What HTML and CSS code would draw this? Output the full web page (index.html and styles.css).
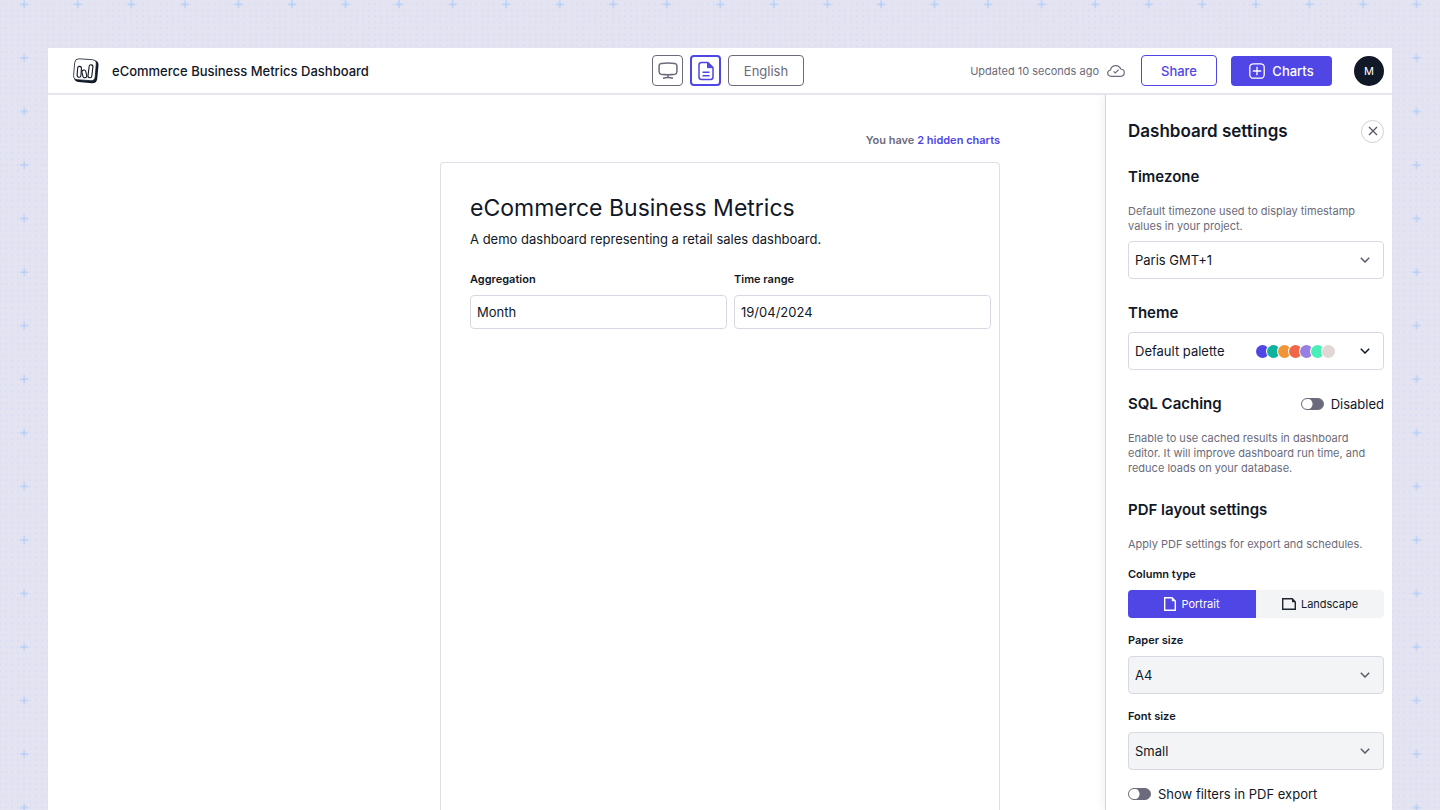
FILE: index.html
```html
<!DOCTYPE html>
<html lang="en">
<head>
<meta charset="utf-8">
<title>eCommerce Business Metrics Dashboard</title>
<link rel="stylesheet" href="styles.css">
</head>
<body>
<svg class="backdrop" aria-hidden="true">
  <defs>
    <pattern id="dots" x="-2.8" y="1.4" width="5.95" height="5.95" patternUnits="userSpaceOnUse"><rect x="2.5" y="2.5" width="1" height="1" fill="#bfd0f3"/></pattern>
    <pattern id="cross" x="-2.6" y="-22.5" width="53.55" height="53.55" patternUnits="userSpaceOnUse"><path d="M22.8 26.8h8M26.8 22.8v8" stroke="#adcdf8" stroke-width="1.2"/></pattern>
  </defs>
  <rect width="100%" height="100%" fill="url(#dots)"/>
  <rect width="100%" height="100%" fill="url(#cross)"/>
</svg>
<div class="window">
  <header class="topbar">
    <div class="brand">
      <svg class="logo" width="28" height="28" viewBox="0 0 28 28" fill="none" stroke="#111827">
        <path d="M6.5 2.2 22 3.2Q26.800 4 26.500 8L25.200 22Q24.600 26.400 20 26.200L6.500 25Q2 24.200 2 20.500Z" fill="#111827" stroke="none"/>
        <path d="M7 1.800 20.500 2.700Q24.600 3.200 24.300 7L23.200 20Q22.600 24 18.800 23.700L5.200 22.700Q1.300 22.200 1.600 18.500L2.700 5.600Q3.200 1.700 7 1.800Z" fill="#fff" stroke-width=".8"/>
        <g stroke-width="1.100"><rect x="5.400" y="9.400" width="3.800" height="10.800" rx="1.900" transform="rotate(4 7.300 14.500)"/><rect x="10.400" y="13" width="3.900" height="7.800" rx="1.900" transform="rotate(-14 12.300 17)"/><rect x="16.600" y="7.800" width="3.800" height="13" rx="1.900" transform="rotate(7 18.500 14)"/></g>
      </svg>
      <span class="brand-name">eCommerce Business Metrics Dashboard</span>
    </div>
    <div class="views">
      <button class="icon-btn" aria-label="Screen view">
        <svg width="20" height="20" viewBox="0 0 20 20" fill="none" stroke="#6b6b7b" stroke-width="1.500"><path d="M3 2.500Q10 1.500 17 2.500 18.700 2.900 18.900 4.600V10.800Q18.800 12.900 17 13.200 10 14.200 3 13.200 1.200 12.900 1.100 10.800V4.600Q1.200 2.800 3 2.500ZM10 14v2.500"/><path d="M5 17.200Q10 15.800 15 17.200" stroke-width="1.700"/></svg>
      </button>
      <button class="icon-btn active" aria-label="Document view">
        <svg width="20" height="20" viewBox="0 0 20 20" fill="none" stroke="#4f46e5" stroke-width="1.500"><path d="M11.800 1.500H5.500Q3 1.500 3 4V16Q3 18.500 5.500 18.500H14.500Q17 18.500 17 16V6.500Z"/><path d="M11.500 1.500V6.700H17Z" fill="#4f46e5" stroke-width="1"/><path d="M6.500 11.300h7M6.500 14.700h7"/></svg>
      </button>
      <button class="language">English</button>
    </div>
    <div class="actions">
      <span class="updated">Updated 10 seconds ago</span>
      <svg class="cloud" width="18" height="12" viewBox="0 0 18 12" fill="none" stroke="#6b6b7b" stroke-width="1.200"><path d="M4.500 11.300C2.200 11.300.700 9.900.700 8.100.700 6.500 1.900 5.300 3.500 5 4 2.500 6.200.700 8.800.700 11 .700 12.900 2 13.700 4 15.900 4.200 17.300 5.700 17.300 7.600 17.300 9.700 15.700 11.300 13.600 11.300Z"/><path d="M6.600 6.400 8.300 8 11.600 4.700"/></svg>
      <button class="share">Share</button>
      <button class="charts"><svg width="16" height="16" viewBox="0 0 16 16" fill="none" stroke="#fff" stroke-width="1.300"><rect x=".800" y=".800" width="14.400" height="14.400" rx="3.500"/><path d="M8 3.800v8.400M3.800 8h8.400"/></svg>Charts</button>
      <button class="avatar" aria-label="Account M">M</button>
    </div>
  </header>
  <div class="workspace">
    <main class="canvas">
      <p class="hidden-note">You have <a href="#">2 hidden charts</a></p>
      <section class="paper">
        <h1>eCommerce Business Metrics</h1>
        <p class="lead">A demo dashboard representing a retail sales dashboard.</p>
        <div class="filters">
          <div><label class="label" for="agg">Aggregation</label><input class="filter" id="agg" type="text" value="Month"></div>
          <div><label class="label" for="range">Time range</label><input class="filter" id="range" type="text" value="19/04/2024"></div>
        </div>
      </section>
    </main>
    <aside class="panel">
      <div class="row">
        <h2>Dashboard settings</h2>
        <button class="close" aria-label="Close"><svg width="10" height="10" viewBox="0 0 10 10" stroke="#5b5b6b" stroke-width="1.400"><path d="M1 1l8 8M9 1 1 9"/></svg></button>
      </div>
      <section class="group">
        <h3 id="tz">Timezone</h3>
        <p class="hint">Default timezone used to display timestamp values in your project.</p>
        <div class="select"><select aria-labelledby="tz"><option>Paris GMT+1</option></select><svg class="chevron" width="10" height="6" viewBox="0 0 10 6"><path d="M.800.800 5 5 9.200.800"/></svg></div>
      </section>
      <section class="group">
        <h3>Theme</h3>
        <button class="palette">
          <span>Default palette</span>
          <span class="swatches"><i class="sw indigo"></i><i class="sw teal"></i><i class="sw orange"></i><i class="sw coral"></i><i class="sw purple"></i><i class="sw mint"></i><i class="sw grey"></i></span>
          <svg class="chevron dark" width="10" height="6" viewBox="0 0 10 6"><path d="M.800.800 5 5 9.200.800"/></svg>
        </button>
      </section>
      <section class="group">
        <div class="row">
          <h3>SQL Caching</h3>
          <label class="toggle"><input type="checkbox" role="switch">Disabled</label>
        </div>
        <p class="hint">Enable to use cached results in dashboard editor. It will improve dashboard run time, and reduce loads on your database.</p>
      </section>
      <section class="group">
        <h3>PDF layout settings</h3>
        <p class="hint">Apply PDF settings for export and schedules.</p>
        <div class="field">
          <span class="label">Column type</span>
          <div class="segmented">
            <button class="seg on"><svg width="12" height="14" viewBox="0 0 12 14" fill="none" stroke="#fff" stroke-width="1.400"><path d="M.700.700H8L11.300 4V13.300H.700Z"/><path d="M7.800.700V4.200H11.300Z" fill="#fff" stroke="none"/></svg>Portrait</button>
            <button class="seg"><svg width="14" height="12" viewBox="0 0 14 12" fill="none" stroke="#1f2430" stroke-width="1.400"><path d="M.700.700H10.300L13.300 4V11.300H.700Z"/><path d="M10 .700V4.200H13.300Z" fill="#1f2430" stroke="none"/></svg>Landscape</button>
          </div>
        </div>
        <div class="field">
          <label class="label" for="size">Paper size</label>
          <div class="select muted"><select id="size"><option>A4</option></select><svg class="chevron" width="10" height="6" viewBox="0 0 10 6"><path d="M.800.800 5 5 9.200.800"/></svg></div>
        </div>
        <div class="field">
          <label class="label" for="font">Font size</label>
          <div class="select muted"><select id="font"><option>Small</option></select><svg class="chevron" width="10" height="6" viewBox="0 0 10 6"><path d="M.800.800 5 5 9.200.800"/></svg></div>
        </div>
        <label class="toggle field"><input type="checkbox" role="switch">Show filters in PDF export</label>
      </section>
    </aside>
  </div>
</div>
</body>
</html>
```

FILE: styles.css
```css
* { box-sizing: border-box; }
body {
  margin: 0;
  height: 100vh;
  padding: 48px 48px 0;
  overflow: hidden;
  background: #e4e3f1;
  color: #111827;
  font: 13px/20px Inter, sans-serif;
}
h1, h2, h3, p { margin: 0; }
button, input, select { font: inherit; color: inherit; margin: 0; }
button { display: flex; align-items: center; justify-content: center; padding: 0; background: #fff; cursor: pointer; }
svg { flex: none; }

.backdrop { position: absolute; inset: 0; width: 100%; height: 100%; z-index: -1; }
.window { height: 100%; display: flex; flex-direction: column; background: #fff; }

.topbar {
  flex: none;
  display: grid;
  grid-template-columns: 1fr auto 1fr;
  align-items: center;
  height: 47px;
  padding: 0 8px 0 24px;
  border-bottom: 2px solid #e5e5ec;
}
.brand { display: flex; align-items: center; gap: 12px; }
.brand-name { font-weight: 500; }
.views { display: flex; gap: 7px; }
.icon-btn { width: 31px; height: 31px; border: 1px solid #6b6b7b; border-radius: 4px; }
.icon-btn.active { border: 2px solid #4f46e5; }
.language { width: 76px; height: 31px; border: 1px solid #6b6b7b; border-radius: 4px; color: #6b6b7b; }
.actions { display: flex; align-items: center; justify-content: flex-end; }
.updated { font-size: 11px; color: #6b6b7b; }
.cloud { margin: 0 16px 0 8px; }
.share { width: 76px; height: 31px; border: 1px solid #4f46e5; border-radius: 4px; color: #4f46e5; font-weight: 500; }
.charts { width: 101px; height: 30px; gap: 7px; margin: 0 22px 0 14px; border: 0; border-radius: 4px; background: #4f46e5; color: #fff; font-weight: 500; }
.avatar { width: 30px; height: 30px; border: 0; border-radius: 50%; background: #111827; color: #fff; font-size: 11px; }

.workspace { flex: 1; min-height: 0; display: grid; grid-template-columns: 1fr minmax(0, 560px) 1fr; grid-template-rows: minmax(0, 1fr); }
.canvas { grid-column: 2; display: flex; flex-direction: column; padding-top: 37px; }
.hidden-note { margin-bottom: 14px; text-align: right; font-size: 11px; line-height: 16px; font-weight: 600; color: #6b6b7b; }
.hidden-note a { color: #4f46e5; text-decoration: none; }
.paper { flex: 1; padding: 29px 8px 0 29px; border: 1px solid #dfdfe7; border-bottom: 0; border-radius: 4px 4px 0 0; }
h1 { font-size: 23px; line-height: 32px; font-weight: 400; }
.lead { margin-top: 5px; }
.filters { display: grid; grid-template-columns: 1fr 1fr; gap: 7px; margin-top: 22px; }
.label { display: block; margin-bottom: 8px; font-size: 11px; line-height: 16px; font-weight: 600; }
.filter { width: 100%; height: 34px; padding: 0 6px; border: 1px solid #d8d8e2; border-radius: 4px; background: #fff; }

.panel { grid-column: 3; justify-self: end; width: 287px; padding: 24px 8px 0 22px; overflow: hidden; border-left: 1px solid #d5d5dc; box-shadow: -3px 0 8px rgba(17, 24, 39, .05); clip-path: inset(0 0 0 -12px); }
.row { display: flex; align-items: center; justify-content: space-between; }
h2 { font-size: 17px; line-height: 24px; font-weight: 600; }
h3 { font-size: 15px; line-height: 20px; font-weight: 600; }
.close { width: 23px; height: 23px; border: 1px solid #cfcfda; border-radius: 50%; }
.group { margin-top: 24px; }
.hint { margin-top: 17px; padding-right: 8px; font-size: 11px; line-height: 15px; color: #6b6b7b; }
.select { position: relative; }
.hint + .select { margin-top: 7px; }
.select select, .palette { width: 100%; height: 38px; padding: 0 6px; border: 1px solid #d8d8e2; border-radius: 4px; background: #fff; appearance: none; }
.muted select { background: #f3f4f6; }
.chevron { fill: none; stroke: #5b5b6b; stroke-width: 1.5px; }
.select .chevron { position: absolute; right: 14px; top: 16px; pointer-events: none; }
.chevron.dark { stroke: #111827; }
.palette { justify-content: space-between; gap: 26px; margin-top: 9px; padding-right: 13px; }
.swatches { display: flex; margin-left: auto; padding-right: 1px; }
.sw { width: 13px; height: 13px; margin-right: -2px; border-radius: 50%; box-shadow: 0 0 0 1px #fff; }
.indigo { background: #4f46e5; }
.teal { background: #0db39e; }
.orange { background: #f29539; }
.coral { background: #f26648; }
.purple { background: #9680e0; }
.mint { background: #48f0b7; }
.grey { background: #e0d7d5; }
.toggle { display: flex; align-items: center; gap: 7px; }
.toggle input { appearance: none; width: 23px; height: 12px; border: 1px solid #6b6b7b; border-radius: 6px; background: radial-gradient(circle at 5px 5px, #fff 5px, #6b6b7b 6px); }
.field { margin-top: 14px; }
.segmented { display: grid; grid-template-columns: 1fr 1fr; overflow: hidden; border-radius: 4px; }
.seg { height: 28px; gap: 5px; border: 0; background: #f3f4f6; font-size: 11px; }
.seg.on { background: #4f46e5; color: #fff; }
```
